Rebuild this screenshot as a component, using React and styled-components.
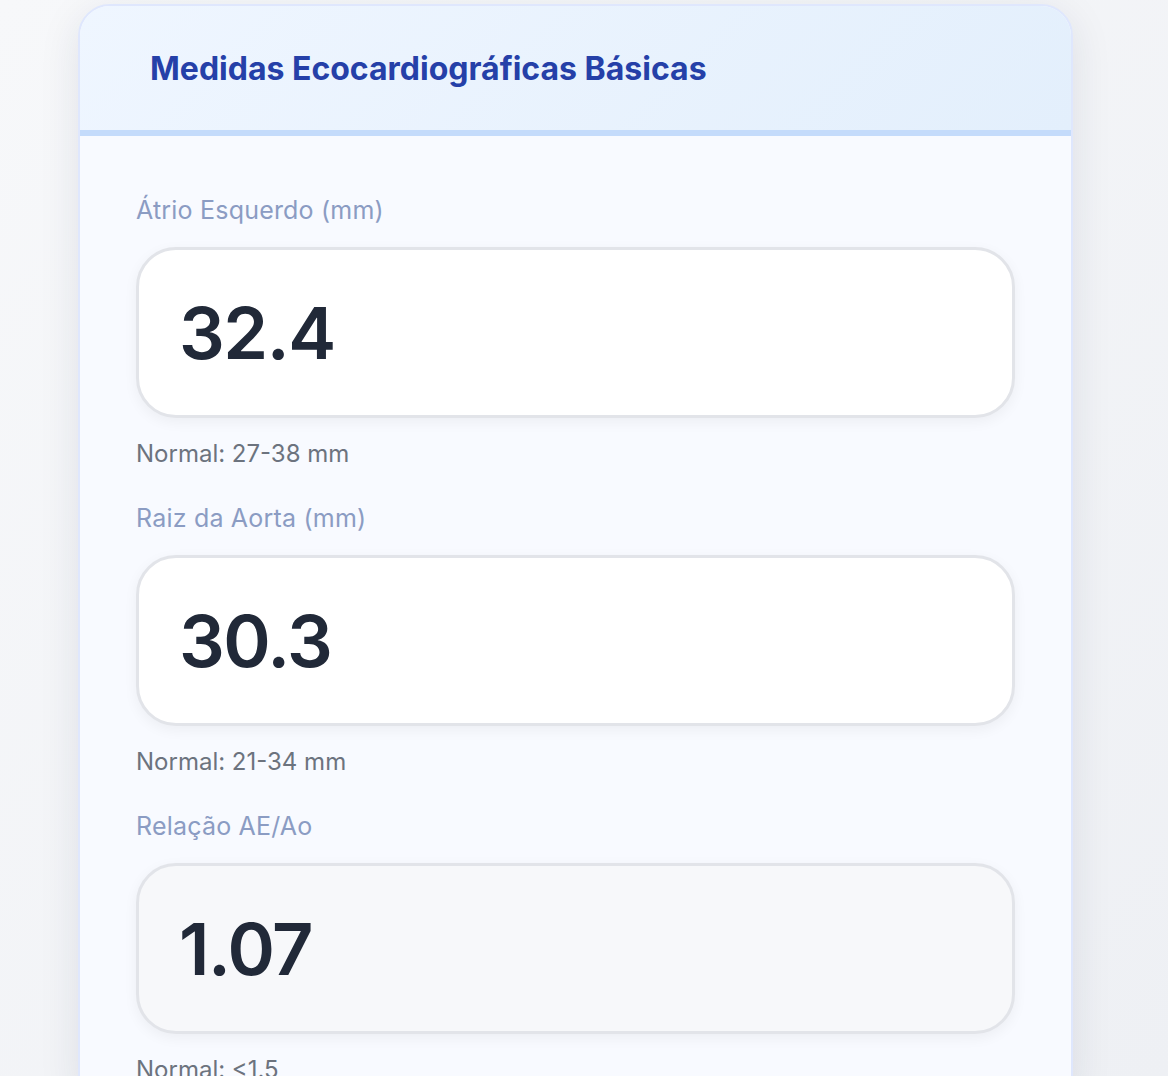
import React from "react";
import styled, { createGlobalStyle } from "styled-components";

const fields = [
  { label: "Átrio Esquerdo (mm)", value: "32.4", normal: "Normal: 27-38 mm" },
  { label: "Raiz da Aorta (mm)", value: "30.3", normal: "Normal: 21-34 mm" },
  { label: "Relação AE/Ao", value: "1.07", normal: "Normal: <1.5", computed: true },
];

export default function App() {
  return (
    <>
      <GlobalStyle />
      <Page>
        <Card>
          <CardHeader>
            <Title>Medidas Ecocardiográficas Básicas</Title>
          </CardHeader>
          <CardBody>
            {fields.map((f) => (
              <Field key={f.label}>
                <Label>{f.label}</Label>
                <ValueBox type="text" value={f.value} readOnly $computed={f.computed} />
                <Hint>{f.normal}</Hint>
              </Field>
            ))}
          </CardBody>
        </Card>
      </Page>
    </>
  );
}

const GlobalStyle = createGlobalStyle`
  html, body {
    margin: 0;
    padding: 0;
    height: 100%;
  }
  body {
    font-family: "Inter", "Noto Sans", sans-serif;
    background: linear-gradient(135deg, #f7f8fa 0%, #eef0f4 100%);
    overflow: hidden;
  }
`;

const Page = styled.div`
  min-height: 1076px;
  padding: 4px 0 0 78px;
  box-sizing: border-box;
`;

const Card = styled.div`
  width: 995px;
  background: #f8faff;
  border: 2px solid #dfe7fd;
  border-radius: 32px 32px 0 0;
  box-shadow: 0 10px 40px rgba(30, 40, 70, 0.1);
  overflow: hidden;
  box-sizing: border-box;
`;

const CardHeader = styled.div`
  height: 124px;
  padding: 0 0 0 70px;
  display: flex;
  align-items: center;
  background: linear-gradient(135deg, #eff6ff 0%, #e3effc 100%);
  border-bottom: 6px solid #c4dbfb;
`;

const Title = styled.h1`
  margin: 0;
  font-size: 32px;
  font-weight: 700;
  color: #2540a8;
`;

const CardBody = styled.div`
  padding: 57px 56px 0 56px;
  display: flex;
  flex-direction: column;
  gap: 30px;
`;

const Field = styled.div`
  display: flex;
  flex-direction: column;
`;

const Label = styled.label`
  font-size: 25px;
  line-height: 34px;
  letter-spacing: 0.2px;
  color: #8b9cc3;
  margin-bottom: 20px;
`;

const ValueBox = styled.input`
  height: 171px;
  box-sizing: border-box;
  border: 3px solid #e2e4e9;
  border-radius: 40px;
  background: ${(p) => (p.$computed ? "#f7f8fa" : "#ffffff")};
  box-shadow: 0 4px 14px rgba(0, 0, 0, 0.05);
  padding: 0 40px 0 40px;
  font-family: "Inter", sans-serif;
  font-size: 72px;
  font-weight: 600;
  letter-spacing: -1.5px;
  color: #212938;
  outline: none;
`;

const Hint = styled.span`
  margin-top: 19px;
  font-size: 24px;
  line-height: 34px;
  color: #6c737e;
`;
